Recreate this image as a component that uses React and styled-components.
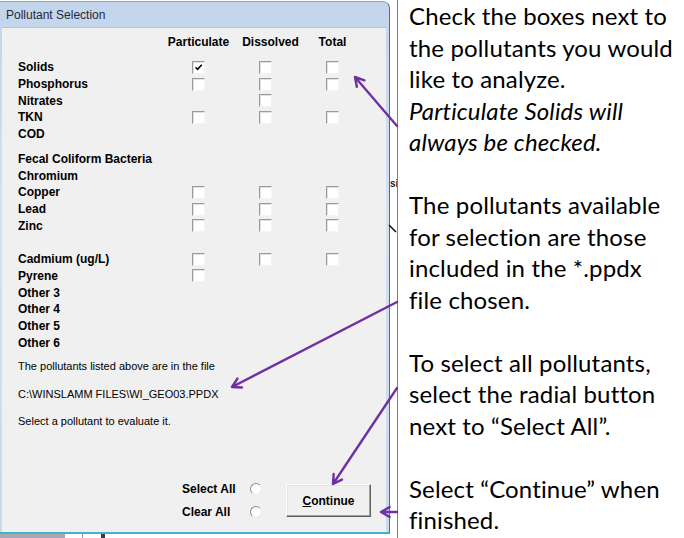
import React from 'react';
import styled, { createGlobalStyle } from 'styled-components';

const GlobalStyle = createGlobalStyle`
  html, body {
    margin: 0;
    padding: 0;
    background: #fff;
  }
  body {
    width: 684px;
    height: 538px;
    overflow: hidden;
  }
`;

const Page = styled.div`
  position: relative;
  display: flex;
  width: 684px;
  height: 538px;
  background: #fff;
  overflow: hidden;
`;

const DesktopColumn = styled.div`
  display: flex;
  flex-direction: column;
  width: 390px;
  flex: none;
`;

const Window = styled.div`
  box-sizing: border-box;
  width: 390px;
  height: 533px;
  margin-top: 1px;
  display: flex;
  flex-direction: column;
  border-top: 1px solid #8ea5bf;
  border-right: 1px solid #41748f;
  border-bottom: 2px solid #3fb3d6;
  border-radius: 0 7px 0 0;
  background: linear-gradient(180deg, #c3d5eb 0%, #d3e1f1 40%, #c9daee 100%);
  padding: 0 3px 0 2px;
`;

const TitleBar = styled.div`
  height: 25px;
  display: flex;
  align-items: center;
  padding-left: 4px;
  font-family: 'Liberation Sans', Arial, sans-serif;
  font-size: 12px;
  color: #1e2a38;
`;

const Client = styled.div`
  flex: 1;
  display: flex;
  flex-direction: column;
  background: #f0f0f0;
  border-top: 1px solid #b3c4d8;
  padding: 6px 0 0 16px;
  font-family: 'Liberation Sans', Arial, sans-serif;
  color: #000;
`;

const Table = styled.div`
  display: flex;
  flex-direction: column;
  gap: 8.3px;
`;

const Grid = styled.div`
  display: grid;
  grid-template-columns: 147px 67px 67px 67px;
  grid-auto-rows: 16.7px;
  align-items: center;
`;

const Label = styled.div`
  font-size: 12px;
  font-weight: bold;
  white-space: nowrap;
`;

const Heading = styled(Label)`
  text-align: center;
  transform: translateX(${({ $shift }) => $shift || 0}px);
`;

const Cell = styled.div`
  display: flex;
  justify-content: center;
  align-items: center;
`;

const Box = styled.span`
  box-sizing: border-box;
  width: 13px;
  height: 13px;
  display: flex;
  align-items: center;
  justify-content: center;
  background: #fff;
  border: 1px solid;
  border-color: #9a9a9a #f4f4f4 #f4f4f4 #9a9a9a;
  box-shadow: inset 1px 1px 0 #e2e2e2;
`;

const Info = styled.div`
  margin-top: 2.3px;
  display: flex;
  flex-direction: column;
`;

const InfoLine = styled.div`
  height: 27.5px;
  line-height: 27.5px;
  font-size: 11px;
  white-space: nowrap;
`;

const Controls = styled.div`
  margin-top: 42px;
  display: flex;
  justify-content: flex-end;
  align-items: center;
  gap: 24px;
  padding-right: 15px;
`;

const RadioGroup = styled.div`
  display: flex;
  flex-direction: column;
`;

const RadioRow = styled.div`
  height: 23px;
  display: flex;
  align-items: center;
`;

const RadioLabel = styled(Label)`
  width: 68px;
`;

const Radio = styled.span`
  box-sizing: border-box;
  width: 12px;
  height: 12px;
  border-radius: 50%;
  background: #fff;
  border: 1px solid;
  border-color: #8d8d8d #e8e8e8 #e8e8e8 #8d8d8d;
`;

const Button = styled.div`
  box-sizing: border-box;
  width: 85px;
  height: 33px;
  display: flex;
  align-items: center;
  justify-content: center;
  background: #f0f0f0;
  border: 1px solid;
  border-color: #fff #5f5f5f #5f5f5f #fff;
  box-shadow: inset -1px -1px 0 #a0a0a0, inset 1px 1px 0 #e4e4e4;
  font-size: 12px;
  font-weight: bold;

  u {
    text-decoration: underline;
  }
`;

const DesktopStrip = styled.div`
  height: 4px;
  background: linear-gradient(
    90deg,
    #a9a9a9 0 65px,
    #fff 65px 82px,
    #9c9c9c 82px 83px,
    #fff 83px 101px,
    #3c3c3c 101px 105px,
    #fff 105px
  );
`;

const Gap = styled.div`
  width: 7px;
  flex: none;
  overflow: hidden;
  padding-top: 178px;
  font-family: 'Liberation Sans', Arial, sans-serif;
  font-size: 10px;
  font-weight: bold;
  color: #222;
`;

const Notes = styled.div`
  flex: 1;
  border-left: 1px solid #8a70b2;
  padding-left: 11px;
  font-family: Lato, 'Open Sans', sans-serif;
  font-size: 24px;
  letter-spacing: 0.15px;
  line-height: 31.5px;
  color: #000;
  white-space: nowrap;

  em {
    font-style: italic;
  }
`;

const Overlay = styled.svg`
  position: absolute;
  inset: 0;
  pointer-events: none;
`;

const rows1 = [
  ['Solids', [true, false, false]],
  ['Phosphorus', [false, false, false]],
  ['Nitrates', [null, false, null]],
  ['TKN', [false, false, false]],
  ['COD', [null, null, null]],
];

const rows2 = [
  ['Fecal Coliform Bacteria', [null, null, null]],
  ['Chromium', [null, null, null]],
  ['Copper', [false, false, false]],
  ['Lead', [false, false, false]],
  ['Zinc', [false, false, false]],
  ['', [null, null, null]],
  ['Cadmium (ug/L)', [false, false, false]],
  ['Pyrene', [false, null, null]],
  ['Other 3', [null, null, null]],
  ['Other 4', [null, null, null]],
  ['Other 5', [null, null, null]],
  ['Other 6', [null, null, null]],
];

function Check() {
  return (
    <svg width="9" height="9" viewBox="0 0 9 9">
      <path d="M1.5 4.2 L3.6 6.4 L7.8 1.8" fill="none" stroke="#000" strokeWidth="1.6" />
    </svg>
  );
}

function Rows({ rows }) {
  return (
    <Grid>
      {rows.map(([name, boxes], i) => (
        <React.Fragment key={i}>
          <Label>{name}</Label>
          {boxes.map((b, j) => (
            <Cell key={j}>{b !== null && <Box>{b && <Check />}</Box>}</Cell>
          ))}
        </React.Fragment>
      ))}
    </Grid>
  );
}

function arrow(x1, y1, x2, y2, len = 10, ang = Math.PI / 6) {
  const a = Math.atan2(y2 - y1, x2 - x1);
  const h1 = [x2 - len * Math.cos(a - ang), y2 - len * Math.sin(a - ang)];
  const h2 = [x2 - len * Math.cos(a + ang), y2 - len * Math.sin(a + ang)];
  return `M${x1} ${y1} L${x2} ${y2} M${h1[0]} ${h1[1]} L${x2} ${y2} L${h2[0]} ${h2[1]}`;
}

export default function App() {
  return (
    <Page>
      <GlobalStyle />
      <DesktopColumn>
        <Window>
          <TitleBar>Pollutant Selection</TitleBar>
          <Client>
            <Table>
              <Grid>
                <span />
                <Heading>Particulate</Heading>
                <Heading $shift={5}>Dissolved</Heading>
                <Heading>Total</Heading>
              </Grid>
              <Rows rows={rows1} />
              <Rows rows={rows2} />
            </Table>
            <Info>
              <InfoLine>The pollutants listed above are in the file</InfoLine>
              <InfoLine>C:\WINSLAMM FILES\WI_GEO03.PPDX</InfoLine>
              <InfoLine>Select a pollutant to evaluate it.</InfoLine>
            </Info>
            <Controls>
              <RadioGroup>
                <RadioRow>
                  <RadioLabel>Select All</RadioLabel>
                  <Radio />
                </RadioRow>
                <RadioRow>
                  <RadioLabel>Clear All</RadioLabel>
                  <Radio />
                </RadioRow>
              </RadioGroup>
              <Button>
                <span>
                  <u>C</u>ontinue
                </span>
              </Button>
            </Controls>
          </Client>
        </Window>
        <DesktopStrip />
      </DesktopColumn>
      <Gap>si</Gap>
      <Notes>
        Check the boxes next to
        <br />
        the pollutants you would
        <br />
        like to analyze.
        <br />
        <em>Particulate Solids will</em>
        <br />
        <em>always be checked.</em>
        <br />
        <br />
        The pollutants available
        <br />
        for selection are those
        <br />
        included in the *.ppdx
        <br />
        file chosen.
        <br />
        <br />
        To select all pollutants,
        <br />
        select the radial button
        <br />
        next to “Select All”.
        <br />
        <br />
        Select “Continue” when
        <br />
        finished.
      </Notes>
      <Overlay width="684" height="538" viewBox="0 0 684 538">
        <path d="M389 225 L396 232" stroke="#111" strokeWidth="1.5" />
        <g fill="none" stroke="#7030a0" strokeWidth="2.4" strokeLinecap="round" strokeLinejoin="round">
          <path d={arrow(397, 126, 355, 77)} />
          <path d={arrow(397, 302, 232, 387)} />
          <path d={arrow(397, 388, 333, 484)} />
          <path d={arrow(397, 512, 381, 512)} />
        </g>
      </Overlay>
    </Page>
  );
}
